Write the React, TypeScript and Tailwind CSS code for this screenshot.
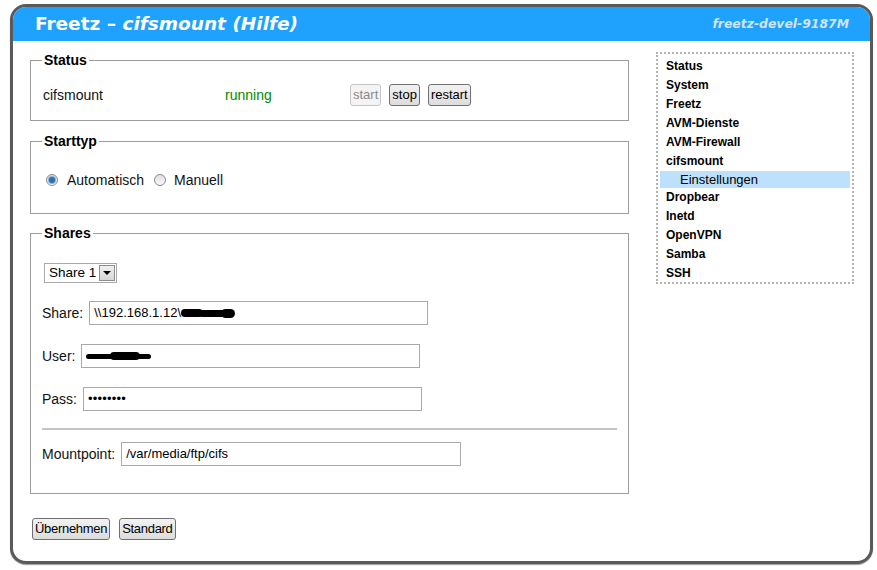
import type { ReactNode } from 'react';

const SANS = 'font-["Liberation_Sans",Arial,sans-serif]';

const menu = ['Status', 'System', 'Freetz', 'AVM-Dienste', 'AVM-Firewall', 'cifsmount'];
const menuAfter = ['Dropbear', 'Inetd', 'OpenVPN', 'Samba', 'SSH'];

const Box = ({ title, className, children }: { title: string; className?: string; children: ReactNode }) => (
  <fieldset className={`border border-[#9c9c9c] px-[11px] ${className ?? ''}`}>
    <legend className="px-[2px] text-[14px] font-bold leading-[16px] text-black">{title}</legend>
    {children}
  </fieldset>
);

const Btn = ({ children, disabled }: { children: ReactNode; disabled?: boolean }) => (
  <button
    type="button"
    className={
      disabled
        ? 'h-[22px] rounded-[3px] border border-[#c4c4c4] bg-[#f4f4f4] px-[2px] text-[13px] leading-[18px] text-[#8a8a8a]'
        : 'h-[22px] rounded-[3px] border border-[#707070] bg-gradient-to-b from-[#f2f2f2] to-[#dcdcdc] px-[2px] text-[13px] leading-[18px] text-black'
    }
  >
    {children}
  </button>
);

const Radio = ({ checked }: { checked?: boolean }) => (
  <span className="flex h-[12px] w-[12px] items-center justify-center rounded-full border border-[#8a8a8a] bg-gradient-to-b from-[#dedede] to-[#fafafa]">
    {checked && <span className="h-[6px] w-[6px] rounded-full bg-[#2f6fae] shadow-[0_0_0_1px_#7fb0de]" />}
  </span>
);

const Field = ({ label, width, children }: { label: string; width: number; children?: ReactNode }) => (
  <div className="flex items-center gap-[6px]">
    <span className="text-[14px] text-[#111]">{label}</span>
    <div
      className="flex h-[24px] items-center border border-[#a9a9a9] bg-white pl-[4px] text-[13px] text-black"
      style={{ width }}
    >
      {children}
    </div>
  </div>
);

const App = () => {
  return (
    <div className={`h-[570px] w-[877px] overflow-hidden bg-white pl-[10px] pt-[4px] ${SANS}`}>
      <div className="h-[560px] w-[863px] overflow-hidden rounded-[16px] border-[3px] border-[#5a5a5a] bg-white shadow-[0_1px_1px_#999]">
        <div className="flex h-[34px] items-center justify-between bg-[#1fa2fd] pl-[22px] pr-[21px] font-['DejaVu_Sans',Verdana,sans-serif] font-bold">
          <h1 className="text-[18.5px] text-white">
            Freetz – <i>cifsmount (Hilfe)</i>
          </h1>
          <span className="text-[12.4px] italic text-[#cfe5f8]">freetz-devel-9187M</span>
        </div>

        <div className="flex pl-[17px] pt-[11px]">
          <div className="w-[599px]">
            <Box title="Status">
              <div className="mb-[14px] mt-[16px] flex h-[22px] items-center pl-[1px] text-[14px] text-[#111]">
                <span className="w-[182px]">cifsmount</span>
                <span className="w-[125px] text-[#008a00]">running</span>
                <div className="flex gap-[8px]">
                  <Btn disabled>start</Btn>
                  <Btn>stop</Btn>
                  <Btn>restart</Btn>
                </div>
              </div>
            </Box>

            <Box title="Starttyp" className="mt-[12px]">
              <div className="mb-[25px] mt-[23px] flex h-[16px] items-center text-[14px] text-[#111]">
                <span className="ml-[4px] mr-[9px]">
                  <Radio checked />
                </span>
                <span>Automatisch</span>
                <span className="ml-[10px] mr-[8px]">
                  <Radio />
                </span>
                <span>Manuell</span>
              </div>
            </Box>

            <Box title="Shares" className="mt-[11px]">
              <div className="mb-[27px] mt-[22px] flex flex-col">
                <div className="ml-[2px] flex h-[20px] w-[73px] items-center justify-between border border-[#a9a9a9] bg-white pl-[4px] pr-[1px] text-[13.5px] text-black">
                  <span>Share 1</span>
                  <span className="flex h-[16px] w-[16px] items-center justify-center border border-[#8d8d8d] bg-gradient-to-b from-[#f0f0f0] to-[#d6d6d6]">
                    <span className="h-0 w-0 border-x-[4px] border-t-[4px] border-x-transparent border-t-black" />
                  </span>
                </div>

                <div className="mt-[18px]">
                  <Field label="Share:" width={339}>
                    <span>\\192.168.1.12\</span>
                    <span className="flex items-center">
                      <span className="h-[8px] w-[22px] rounded-full bg-black" />
                      <span className="-ml-[4px] h-[7px] w-[26px] rounded-full bg-black" />
                      <span className="-ml-[4px] h-[9px] w-[14px] rounded-full bg-black" />
                    </span>
                  </Field>
                </div>
                <div className="mt-[19px]">
                  <Field label="User:" width={339}>
                    <span className="flex items-center">
                      <span className="h-[5px] w-[28px] rounded-full bg-black" />
                      <span className="-ml-[4px] h-[8px] w-[30px] rounded-full bg-black" />
                      <span className="-ml-[3px] h-[5px] w-[14px] rounded-full bg-black" />
                    </span>
                  </Field>
                </div>
                <div className="mt-[19px]">
                  <Field label="Pass:" width={339}>
                    <span className="text-[13px] tracking-[0.2px]">••••••••</span>
                  </Field>
                </div>

                <div className="mt-[17px] h-[2px] bg-[#c4c4c4]" />

                <div className="mt-[12px]">
                  <Field label="Mountpoint:" width={340}>
                    <span>/var/media/ftp/cifs</span>
                  </Field>
                </div>
              </div>
            </Box>

            <div className="ml-[2px] mt-[24px] flex gap-[9px]">
              <Btn>
                <span className="tracking-[-0.3px]">Übernehmen</span>
              </Btn>
              <Btn>
                <span className="tracking-[-0.3px]">Standard</span>
              </Btn>
            </div>
          </div>

          <nav className="ml-[27px] h-[232px] w-[198px] border-2 border-dotted border-[#b4b4b4] pt-[3px]">
            {menu.map((item) => (
              <div key={item} className="pl-[8px] text-[12px] font-bold leading-[19px] text-black">
                {item}
              </div>
            ))}
            <div className="mx-[2px] h-[17px] bg-[#bde1fc] pl-[20px] text-[13px] leading-[17px] text-black">
              Einstellungen
            </div>
            {menuAfter.map((item) => (
              <div key={item} className="pl-[8px] text-[12px] font-bold leading-[19px] text-black">
                {item}
              </div>
            ))}
          </nav>
        </div>
      </div>
    </div>
  );
};

export default App;
